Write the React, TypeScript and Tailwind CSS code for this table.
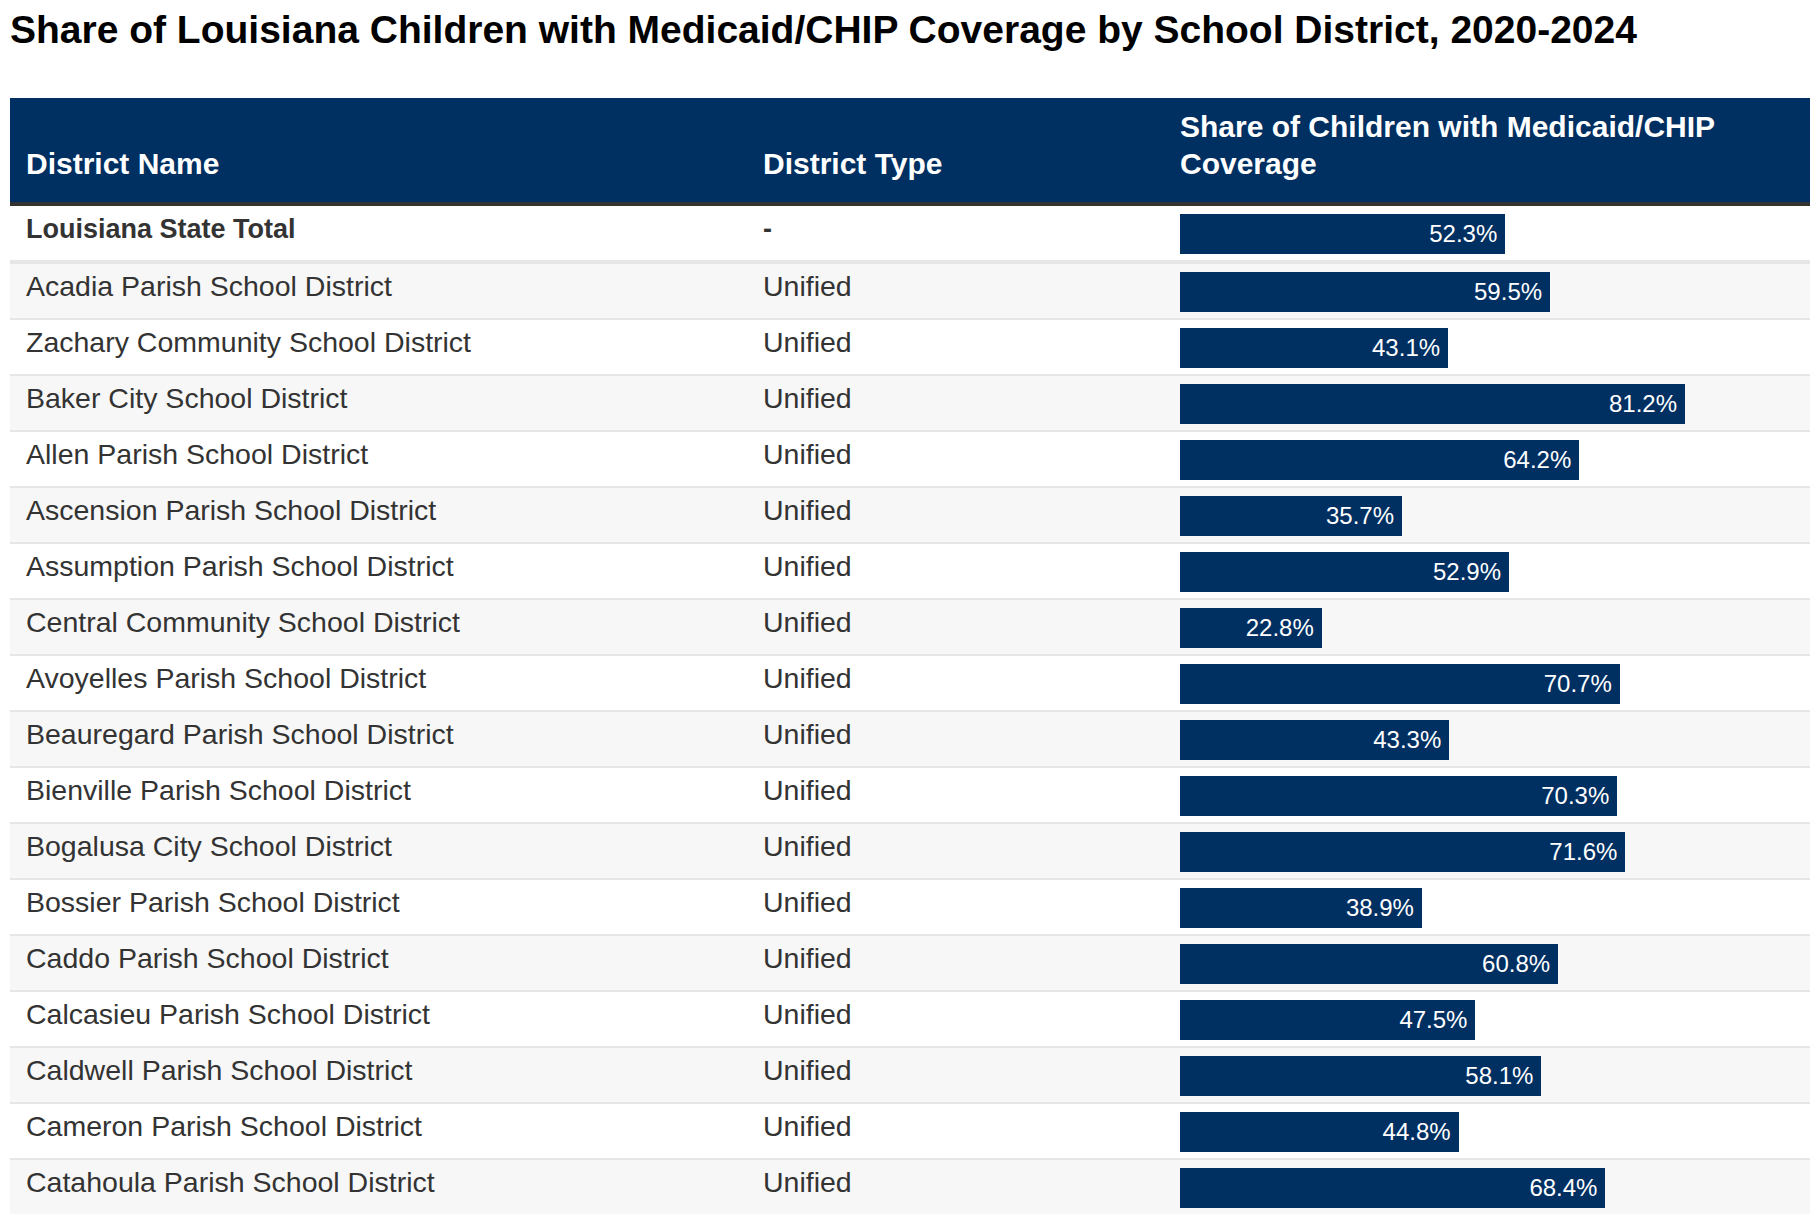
type Row = {
  name: string;
  type: string;
  value: number;
  total?: boolean;
};

const ROWS: Row[] = [
  { name: "Louisiana State Total", type: "-", value: 52.3, total: true },
  { name: "Acadia Parish School District", type: "Unified", value: 59.5 },
  { name: "Zachary Community School District", type: "Unified", value: 43.1 },
  { name: "Baker City School District", type: "Unified", value: 81.2 },
  { name: "Allen Parish School District", type: "Unified", value: 64.2 },
  { name: "Ascension Parish School District", type: "Unified", value: 35.7 },
  { name: "Assumption Parish School District", type: "Unified", value: 52.9 },
  { name: "Central Community School District", type: "Unified", value: 22.8 },
  { name: "Avoyelles Parish School District", type: "Unified", value: 70.7 },
  { name: "Beauregard Parish School District", type: "Unified", value: 43.3 },
  { name: "Bienville Parish School District", type: "Unified", value: 70.3 },
  { name: "Bogalusa City School District", type: "Unified", value: 71.6 },
  { name: "Bossier Parish School District", type: "Unified", value: 38.9 },
  { name: "Caddo Parish School District", type: "Unified", value: 60.8 },
  { name: "Calcasieu Parish School District", type: "Unified", value: 47.5 },
  { name: "Caldwell Parish School District", type: "Unified", value: 58.1 },
  { name: "Cameron Parish School District", type: "Unified", value: 44.8 },
  { name: "Catahoula Parish School District", type: "Unified", value: 68.4 },
];

function CoverageBar({ value }: { value: number }) {
  return (
    <div
      className="flex h-10 items-center justify-end bg-[#002f62] pr-2 text-[24px] leading-none text-white"
      style={{ width: `${value}%` }}
    >
      {value.toFixed(1)}%
    </div>
  );
}

export default function App() {
  return (
    <div className="bg-white px-[10px] font-['Liberation_Sans',Arial,sans-serif]">
      <h1 className="pt-[6px] text-[39px] font-bold leading-[47px] text-black">
        Share of Louisiana Children with Medicaid/CHIP Coverage by School District, 2020-2024
      </h1>

      <table className="mt-[45px] w-[1800px] table-fixed border-collapse">
        <colgroup>
          <col className="w-[737px]" />
          <col className="w-[417px]" />
          <col className="w-[646px]" />
        </colgroup>
        <thead>
          <tr className="border-b-4 border-[#333333] bg-[#002f62] text-left text-[30px] leading-[37px] text-white">
            <th className="px-4 pb-5 pt-[10px] align-bottom font-bold">District Name</th>
            <th className="px-4 pb-5 pt-[10px] align-bottom font-bold">District Type</th>
            <th className="px-4 pb-5 pt-[10px] align-bottom font-bold">
              Share of Children with Medicaid/CHIP Coverage
            </th>
          </tr>
        </thead>
        <tbody>
          {ROWS.map((row, i) => {
            const text = row.total
              ? "px-4 pt-2 align-top text-[27px] font-bold leading-[30px] text-[#333333]"
              : "px-4 pt-2 align-top text-[28.5px] font-normal leading-[28px] text-[#333333]";
            const border = row.total
              ? "border-b-4 border-[#e6e6e6]"
              : i === ROWS.length - 1
                ? ""
                : "border-b-2 border-[#e6e6e6]";
            return (
              <tr
                key={row.name}
                className={border + " " + (i % 2 === 1 ? "bg-[#f7f7f7]" : "bg-white")}
              >
                <td className={text}>{row.name}</td>
                <td className={text}>{row.type}</td>
                <td className="pb-[6px] pl-4 pr-2 pt-2 align-top">
                  <CoverageBar value={row.value} />
                </td>
              </tr>
            );
          })}
        </tbody>
      </table>
    </div>
  );
}
